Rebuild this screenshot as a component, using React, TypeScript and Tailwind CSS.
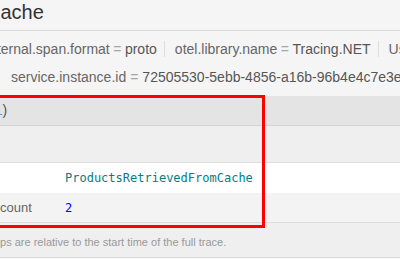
import React from 'react';

const tags = [
  { key: 'internal.span.format', value: 'proto' },
  { key: 'otel.library.name', value: 'Tracing.NET' },
  { key: 'User-Agent', value: 'Mozilla/5.0' },
];

const App = () => {
  return (
    <div className="relative w-[400px] h-[259px] overflow-hidden bg-[#f5f5f5] font-['Liberation_Sans',Arial,sans-serif]">
      {/* span title */}
      <div className="h-[31px] border-b border-[#d9d9d9]">
        <h2 className="ml-[-14px] text-[20px] leading-[24px] text-[#333333] whitespace-nowrap">Cache</h2>
      </div>

      {/* tags summary */}
      <div className="pt-[4px] pb-[5px] text-[14px]">
        <div className="h-[28px] flex items-center ml-[-14px] whitespace-nowrap">
          {tags.map((t, i) => (
            <span
              key={i}
              className={
                i === tags.length - 1
                  ? 'inline-flex items-center h-[16px] pl-[10px]'
                  : i === 0
                  ? 'inline-flex items-center h-[16px] pr-[7px] border-r border-[#dddddd]'
                  : 'inline-flex items-center h-[16px] pl-[10px] pr-[7px] border-r border-[#dddddd]'
              }
            >
              <span className="text-[#666666]">{t.key}</span>
              <span className="text-[#a6a6a6] px-[3.5px]">=</span>
              <span className="text-[#555555]">{t.value}</span>
            </span>
          ))}
        </div>
        <div className="h-[28px] flex items-center pl-[11px] whitespace-nowrap">
          <span className="text-[#666666]">service.instance.id</span>
          <span className="text-[#a6a6a6] px-[4px]">=</span>
          <span className="text-[#555555]">72505530-5ebb-4856-a16b-96b4e4c7e3e6</span>
        </div>
      </div>

      {/* events */}
      <div className="h-[30px] bg-[#e4e4e4] border-b border-[#d4d4d4] flex items-center text-[14px] whitespace-nowrap">
        <span className="ml-[-10px]">
          <span className="text-[#555555]">(</span>
          <span className="text-[#5b8fd6]">1</span>
          <span className="text-[#555555]">)</span>
        </span>
      </div>
      <div className="h-[37px] bg-[#efefef] border-b border-[#dedede]" />

      <div className="grid grid-cols-[65px_1fr]">
        <div className="h-[30px] bg-white" />
        <div className="h-[30px] bg-white flex items-center font-['DejaVu_Sans_Mono',monospace] text-[12px] text-[#008080] whitespace-nowrap">
          ProductsRetrievedFromCache
        </div>
        <div className="h-[30px] bg-[#f3f3f3] border-b border-[#dcdcdc] flex items-center text-[13px] text-[#666666]">
          count
        </div>
        <div className="h-[30px] bg-[#f3f3f3] border-b border-[#dcdcdc] flex items-center font-['DejaVu_Sans_Mono',monospace] text-[12px] text-[#0000ff]">
          2
        </div>
      </div>

      {/* footer */}
      <div className="h-[35px] bg-[#efefef] border-b border-[#dcdcdc] flex items-center pt-[4px] text-[11px] text-[#999999] whitespace-nowrap">
        <span className="ml-[-66px]">Log timestamps are relative to the start time of the full trace.</span>
      </div>

      {/* annotation box */}
      <div className="absolute left-[-10px] top-[95px] w-[275px] h-[133px] border-[3px] border-[#ff0000] pointer-events-none" />
    </div>
  );
};

export default App;
